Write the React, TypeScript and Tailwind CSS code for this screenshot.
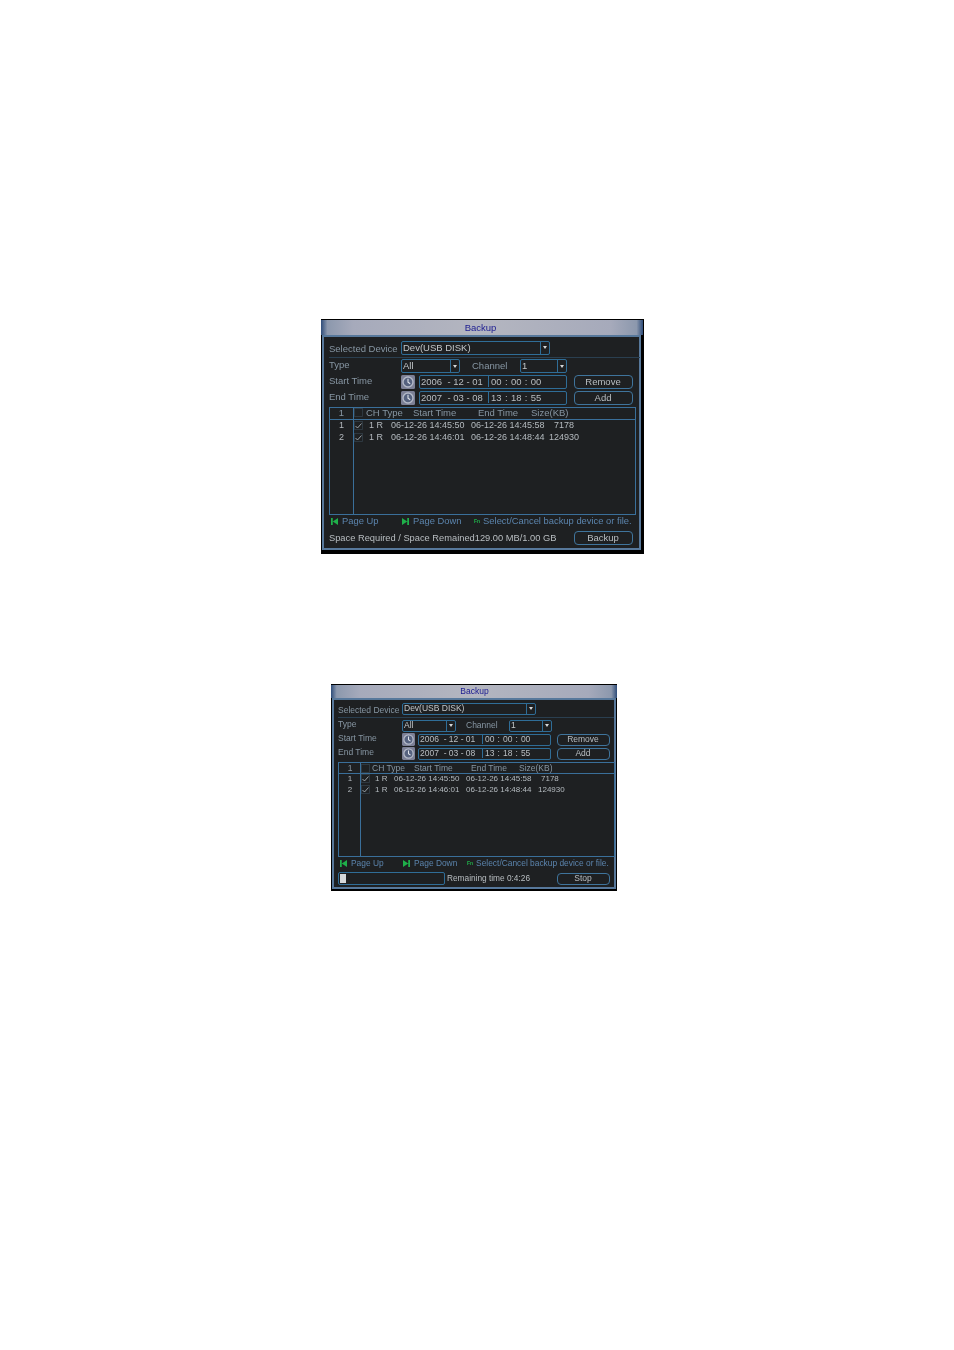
import React from "react";

const Clock = ({ c }: { c: string }) => (
  <svg viewBox="0 0 14 14" className={c}>
    <rect x="0" y="0" width="14" height="14" rx="1.5" fill="#7c8096" />
    <circle cx="7" cy="7" r="5" fill="#56627f" stroke="#b4bac8" strokeWidth="1.4" />
    <path d="M7 3.8V7.2L9.2 8.8" stroke="#dfe3ea" strokeWidth="1.1" fill="none" />
  </svg>
);

const SkipL = () => (
  <svg viewBox="0 0 8 8" className="h-[7px] w-[7px] shrink-0">
    <path d="M0 0H2V8H0ZM8 0V8L2 4Z" fill="#1fb04a" />
  </svg>
);
const SkipR = () => (
  <svg viewBox="0 0 8 8" className="h-[7px] w-[7px] shrink-0">
    <path d="M6 0H8V8H6ZM0 0V8L6 4Z" fill="#1fb04a" />
  </svg>
);

const Check = ({ on }: { on: boolean }) => (
  <svg viewBox="0 0 9 9" className="h-[9px] w-[9px]">
    <rect x="0.5" y="0.5" width="8" height="8" fill="none" stroke="#333f49" strokeWidth="0.8" />
    {on && <path d="M1.5 5L3.5 7L7.5 2.5" stroke="#b8c0c6" strokeWidth="0.8" fill="none" />}
  </svg>
);

const Select = ({ w, h, text, arrow }: { w: string; h: string; text: string; arrow: string }) => (
  <div className={`${w} ${h} flex items-center justify-between rounded-[2px] border border-[#2f6d97] pl-[1px] text-[#c3c7ca]`}>
    <span>{text}</span>
    <span className={`${arrow} flex h-full items-center justify-center border-l border-[#2f6d97]`}>
      <span className="h-0 w-0 border-x-[2.5px] border-t-[3px] border-x-transparent border-t-[#d5d8da]" />
    </span>
  </div>
);

const Btn = ({ w, h, text }: { w: string; h: string; text: string }) => (
  <div className={`${w} ${h} flex shrink-0 items-center justify-center rounded-[4px] border border-[#3f749c] pr-[1px] pb-[1px] text-[#b9bec2]`}>{text}</div>
);

type Cfg = {
  outer: string;
  title: string;
  body: string;
  font: string;
  rowOne: string;
  labelOne: string;
  selOne: string;
  rowH: string;
  ctrlH: string;
  label: string;
  selType: string;
  channel: string;
  selCh: string;
  rowGap: string;
  icon: string;
  field: string;
  fieldA: string;
  fieldB: string;
  btnGap: string;
  btnW: string;
  table: string;
  head: string;
  boxHead: string;
  tRow: string;
  cols: string[];
  headCols: string[];
  vline: string;
  footer: string;
  fA: string;
  fB: string;
};

const Panel = ({ p, bottom }: { p: Cfg; bottom: React.ReactNode }) => (
  <div className={`${p.outer} bg-black font-['Liberation_Sans',sans-serif] ${p.font}`}>
    <div className={`${p.title} flex items-center justify-center border-t border-black bg-[linear-gradient(90deg,#2f4d7a_0%,#8c98ad_2%,#a6aabb_10%,#b4b6c0_50%,#a6aabb_90%,#8c98ad_98%,#2f4d7a_100%)] text-[#1b1b90]`}>Backup</div>
    <div className={`${p.body} border-2 border-[#57789b] bg-[#1e2022]`}>
      <div className={`${p.rowOne} flex items-center border-b border-[#2a3f50] text-[#8796a3]`}>
        <span className={p.labelOne}>Selected Device</span>
        <Select w={p.selOne} h={p.ctrlH} text="Dev(USB DISK)" arrow="w-[9px]" />
      </div>
      <div className={`${p.rowH} mt-[1px] flex items-center text-[#8796a3]`}>
        <span className={`${p.label} pb-[2px]`}>Type</span>
        <Select w={p.selType} h={p.ctrlH} text="All" arrow="w-[9px]" />
        <span className={p.channel}>Channel</span>
        <Select w={p.selCh} h={p.ctrlH} text="1" arrow="w-[9px]" />
      </div>
      {[
        ["Start Time", "2006  - 12 - 01", "00 : 00 : 00", "Remove"],
        ["End Time", "2007  - 03 - 08", "13 : 18 : 55", "Add"],
      ].map((r) => (
        <div key={r[0]} className={`${p.rowH} ${p.rowGap} flex items-center text-[#8796a3]`}>
          <span className={`${p.label} shrink-0 pb-[2px]`}>{r[0]}</span>
          <Clock c={p.icon} />
          <div className={`${p.field} ${p.ctrlH} flex items-center rounded-[2px] border border-[#2f6d97] pb-[1px] whitespace-pre text-[#b9bec2]`}>
            <span className={`${p.fieldA} flex h-full items-center border-r border-[#2f6d97] pl-[1px]`}>{r[1]}</span>
            <span className={`${p.fieldB} pl-[2px] [word-spacing:0.7px]`}>{r[2]}</span>
          </div>
          <div className={p.btnGap}>
            <Btn w={p.btnW} h={p.ctrlH} text={r[3]} />
          </div>
        </div>
      ))}
      <div className={`${p.table} relative border border-[#3a6f9a] text-[#b4babf]`}>
        <div className={`${p.vline} absolute top-0 bottom-0 w-px bg-[#3a6f9a]`} />
        <div className={`${p.head} flex items-center border-b border-[#3a6f9a] text-[#8796a3]`}>
          <span className={`${p.headCols[0]} text-center`}>1</span>
          <span className={p.boxHead}><Check on={false} /></span>
          <span className={p.headCols[1]}>CH Type</span>
          <span className={p.headCols[2]}>Start Time</span>
          <span className={p.headCols[3]}>End Time</span>
          <span>Size(KB)</span>
        </div>
        {[
          ["1", "06-12-26 14:45:50", "06-12-26 14:45:58", "7178"],
          ["2", "06-12-26 14:46:01", "06-12-26 14:48:44", "124930"],
        ].map((r) => (
          <div key={r[0]} className={`${p.tRow} flex items-center`}>
            <span className={`${p.cols[0]} text-center`}>{r[0]}</span>
            <span className={p.cols[1]}><Check on /></span>
            <span className={p.cols[2]}>1 R</span>
            <span className={p.cols[3]}>{r[1]}</span>
            <span className={r[0] === "1" ? p.cols[4] : p.cols[5]}>{r[2]}</span>
            <span>{r[3]}</span>
          </div>
        ))}
      </div>
      <div className={`${p.footer} flex items-center pb-[2px] whitespace-nowrap text-[#5b84ad]`}>
        <span className={`${p.fA} flex items-center gap-[4px]`}><SkipL />Page Up</span>
        <span className={`${p.fB} flex items-center gap-[4px]`}><SkipR />Page Down</span>
        <span className="flex items-center gap-[3px]">
          <span className="text-[5px] font-bold text-[#1fb04a]">Fn</span>Select/Cancel backup device or file.
        </span>
      </div>
      {bottom}
    </div>
  </div>
);

const A: Cfg = {
  outer: "ml-[321px] w-[323px] h-[235px]",
  title: "h-[16px] w-[322px] pr-[3px]",
  body: "ml-[1px] w-[319px] h-[215px] pl-[5px]",
  font: "text-[9.5px] leading-none",
  rowOne: "h-[21px] w-[311px] pt-[1px]",
  labelOne: "w-[72px] pt-[3px]",
  selOne: "w-[149px]",
  rowH: "h-[14px]",
  ctrlH: "h-[14px]",
  label: "w-[72px]",
  selType: "w-[59px]",
  channel: "ml-[12px] w-[48px]",
  selCh: "w-[47px]",
  rowGap: "mt-[2px]",
  icon: "h-[14px] w-[14px] shrink-0",
  field: "ml-[4px] w-[148px]",
  fieldA: "w-[69px]",
  fieldB: "w-[77px]",
  btnGap: "ml-[7px]",
  btnW: "w-[59px]",
  table: "mt-[2px] h-[108px] w-[307px]",
  head: "h-[12px] pb-[2px]",
  boxHead: "w-[13px] pl-[1px]",
  tRow: "h-[11.5px] text-[9px]",
  cols: ["w-[23px]", "w-[16px] pl-[1px]", "w-[22px]", "w-[80px]", "w-[83px]", "w-[78px]"],
  headCols: ["w-[23px]", "w-[47px]", "w-[65px]", "w-[53px]"],
  vline: "left-[23px]",
  footer: "h-[14px] w-[307px] pl-[2px] text-[9.4px]",
  fA: "w-[71px]",
  fB: "w-[72px]",
};

const B: Cfg = {
  outer: "ml-[331px] mt-[130px] w-[286px] h-[207px]",
  title: "h-[14px] w-[286px] pl-[1px]",
  body: "ml-[1px] w-[284px] h-[191px] pl-[4px]",
  font: "text-[8.5px] leading-none",
  rowOne: "h-[18px] w-[276px]",
  labelOne: "w-[64px] pt-[4px]",
  selOne: "w-[134px]",
  rowH: "h-[13px]",
  ctrlH: "h-[12px]",
  label: "w-[64px]",
  selType: "w-[54px]",
  channel: "ml-[10px] w-[43px]",
  selCh: "w-[43px]",
  rowGap: "mt-[1px]",
  icon: "h-[13px] w-[13px] shrink-0",
  field: "ml-[3px] w-[133px]",
  fieldA: "w-[64px]",
  fieldB: "w-[67px]",
  btnGap: "ml-[6px]",
  btnW: "w-[53px]",
  table: "mt-[2px] h-[95px] w-[277px]",
  head: "h-[11px]",
  boxHead: "w-[11px]",
  tRow: "h-[11px] pb-[2px] text-[8px]",
  cols: ["w-[22px]", "w-[14px]", "w-[19px]", "w-[72px]", "w-[75px]", "w-[72px]"],
  headCols: ["w-[22px]", "w-[42px]", "w-[57px]", "w-[48px]"],
  vline: "left-[21px]",
  footer: "h-[14px] w-[277px] pl-[2px] text-[8.4px]",
  fA: "w-[63px]",
  fB: "w-[64px]",
};

export default function App() {
  return (
    <div className="h-[1350px] w-[954px] overflow-hidden bg-white pt-[319px] [filter:blur(0.3px)]">
      <Panel
        p={A}
        bottom={
          <div className="mt-[2px] flex h-[14px] w-[311px] items-center text-[#b9bec2]">
            <span className="w-[245px] pt-[2px] text-[9.3px]">Space Required / Space Remained129.00 MB/1.00 GB</span>
            <Btn w="w-[59px]" h="h-[14px]" text="Backup" />
          </div>
        }
      />
      <Panel
        p={B}
        bottom={
          <div className="mt-[1px] flex h-[13px] w-[276px] items-center text-[#b9bec2]">
            <div className="flex h-[13px] w-[107px] items-center rounded-[2px] border border-[#2f6d97] px-[1px]">
              <div className="h-[9px] w-[6px] bg-[#d5d8da]" />
            </div>
            <span className="ml-[2px] w-[110px] text-[8.3px]">Remaining time 0:4:26</span>
            <Btn w="w-[53px]" h="h-[12px]" text="Stop" />
          </div>
        }
      />
    </div>
  );
}
